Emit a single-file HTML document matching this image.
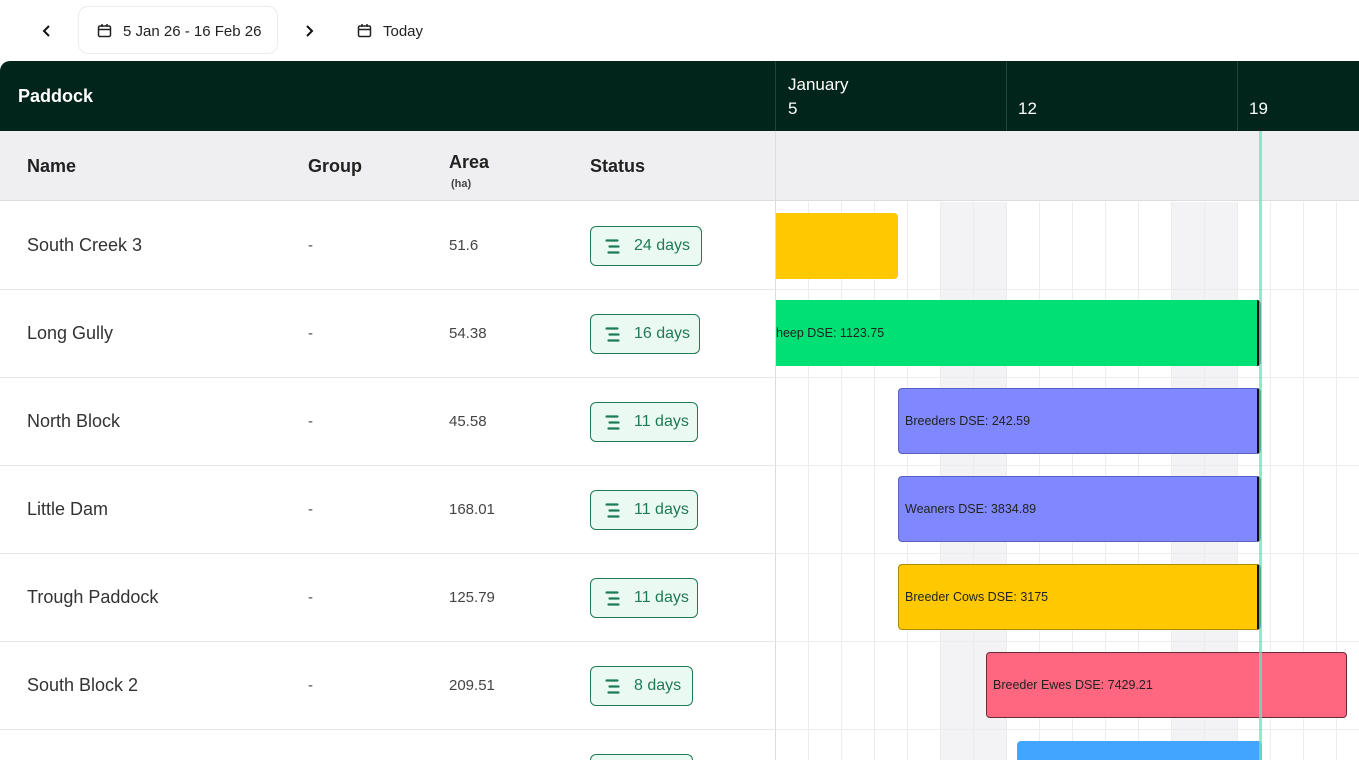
<!DOCTYPE html>
<html style="height:760px;overflow:hidden"><head><style>
*{box-sizing:border-box;margin:0;padding:0}
body{width:1359px;height:760px;overflow:hidden;background:#fff;font-family:"Liberation Sans",sans-serif;position:relative;color:#222}
.a{position:absolute}
.hdr{left:0;top:61px;width:1359px;height:70px;background:#01251a;border-top-left-radius:10px}
.sub{left:0;top:131px;width:1359px;height:70px;background:#efeff1;border-bottom:1px solid #dcdcdc}
.th{font-size:18px;font-weight:bold;color:#222}
.row{left:0;width:776px;height:88px;border-bottom:1px solid #e6e6e6}
.nm{font-size:18px;color:#333}
.sm{font-size:15px;color:#444}
.badge{height:40px;border:1px solid #1f7a55;border-radius:6px;background:#eafaf2;color:#1f7a55;font-size:16px;display:flex;align-items:center;padding-left:14px}
.bar{border-radius:4px;font-size:12.5px;color:#222;display:flex;align-items:center;padding-left:6px;height:66px}
</style></head><body>
<div class="a" style="left:0;top:0;width:1359px;height:760px;overflow:hidden">
<svg class="a" style="left:40px;top:24px" width="14" height="14" viewBox="0 0 14 14"><path d="M9 2 L4 7 L9 12" stroke="#111" stroke-width="2" fill="none"/></svg>
<div class="a" style="left:78px;top:6px;width:200px;height:48px;border:1px solid #ececec;border-radius:10px"></div>
<svg class="a" style="left:97px;top:23px" width="15" height="15" viewBox="0 0 15 15"><rect x="1.5" y="3" width="12" height="10.5" rx="1.5" stroke="#222" stroke-width="1.5" fill="none"/><path d="M1.5 6.5H13.5M5 1V4M10 1V4" stroke="#222" stroke-width="1.5"/></svg>
<div class="a" style="left:123px;top:23px;font-size:15px;color:#222">5 Jan 26 - 16 Feb 26</div>
<svg class="a" style="left:302px;top:24px" width="14" height="14" viewBox="0 0 14 14"><path d="M5 2 L10 7 L5 12" stroke="#111" stroke-width="2" fill="none"/></svg>
<svg class="a" style="left:357px;top:23px" width="15" height="15" viewBox="0 0 15 15"><rect x="1.5" y="3" width="12" height="10.5" rx="1.5" stroke="#222" stroke-width="1.5" fill="none"/><path d="M1.5 6.5H13.5M5 1V4M10 1V4" stroke="#222" stroke-width="1.5"/></svg>
<div class="a" style="left:383px;top:23px;font-size:15px;color:#222">Today</div>

<div class="a hdr"></div>
<div class="a" style="left:18px;top:86px;color:#fff;font-weight:bold;font-size:18px">Paddock</div>
<div class="a" style="left:775px;top:61px;width:1px;height:70px;background:#1d4536"></div>
<div class="a" style="left:1006px;top:61px;width:1px;height:70px;background:#1d4536"></div>
<div class="a" style="left:1237px;top:61px;width:1px;height:70px;background:#1d4536"></div>
<div class="a" style="left:788px;top:75px;color:#fff;font-size:17px">January</div>
<div class="a" style="left:788px;top:99px;color:#fff;font-size:17px">5</div>
<div class="a" style="left:1018px;top:99px;color:#fff;font-size:17px">12</div>
<div class="a" style="left:1249px;top:99px;color:#fff;font-size:17px">19</div>

<div class="a sub"></div>
<div class="a" style="left:775px;top:131px;width:1px;height:629px;background:#dcdcdc"></div>
<div class="a th" style="left:27px;top:156px">Name</div>
<div class="a th" style="left:308px;top:156px">Group</div>
<div class="a th" style="left:449px;top:152px">Area</div>
<div class="a" style="left:451px;top:178px;font-size:11px;font-weight:bold;color:#444">(ha)</div>
<div class="a th" style="left:590px;top:156px">Status</div>

<div class="a" style="left:941px;top:202px;width:66px;height:558px;background:#f3f3f5"></div>
<div class="a" style="left:1172px;top:202px;width:66px;height:558px;background:#f3f3f5"></div>
<div class="a" style="left:776px;top:202px;width:583px;height:558px;background-image:repeating-linear-gradient(90deg,transparent 0 32px,#ececec 32px 33px),repeating-linear-gradient(180deg,transparent 0 87px,#ececec 87px 88px)"></div>

<div class="a row" style="top:202px"></div>
<div class="a row" style="top:290px"></div>
<div class="a row" style="top:378px"></div>
<div class="a row" style="top:466px"></div>
<div class="a row" style="top:554px"></div>
<div class="a row" style="top:642px"></div>

<div class="a nm" style="left:27px;top:235px">South Creek 3</div>
<div class="a nm" style="left:27px;top:323px">Long Gully</div>
<div class="a nm" style="left:27px;top:411px">North Block</div>
<div class="a nm" style="left:27px;top:499px">Little Dam</div>
<div class="a nm" style="left:27px;top:587px">Trough Paddock</div>
<div class="a nm" style="left:27px;top:675px">South Block 2</div>
<div class="a sm" style="left:308px;top:237px">-</div>
<div class="a sm" style="left:308px;top:325px">-</div>
<div class="a sm" style="left:308px;top:413px">-</div>
<div class="a sm" style="left:308px;top:501px">-</div>
<div class="a sm" style="left:308px;top:589px">-</div>
<div class="a sm" style="left:308px;top:677px">-</div>
<div class="a sm" style="left:449px;top:237px">51.6</div>
<div class="a sm" style="left:449px;top:325px">54.38</div>
<div class="a sm" style="left:449px;top:413px">45.58</div>
<div class="a sm" style="left:449px;top:501px">168.01</div>
<div class="a sm" style="left:449px;top:589px">125.79</div>
<div class="a sm" style="left:449px;top:677px">209.51</div>

<svg width="0" height="0" style="position:absolute"><defs><g id="ic"><path d="M1 1.5H12M4 7.5H13M3 13.5H13" stroke="#1f7a55" stroke-width="2.2" stroke-linecap="round"/></g></defs></svg>
<div class="a badge" style="left:590px;top:226px;width:112px"><svg width="15" height="15" viewBox="0 0 14 15"><use href="#ic"/></svg><span style="margin-left:14px">24 days</span></div>
<div class="a badge" style="left:590px;top:314px;width:110px"><svg width="15" height="15" viewBox="0 0 14 15"><use href="#ic"/></svg><span style="margin-left:14px">16 days</span></div>
<div class="a badge" style="left:590px;top:402px;width:108px"><svg width="15" height="15" viewBox="0 0 14 15"><use href="#ic"/></svg><span style="margin-left:14px">11 days</span></div>
<div class="a badge" style="left:590px;top:490px;width:108px"><svg width="15" height="15" viewBox="0 0 14 15"><use href="#ic"/></svg><span style="margin-left:14px">11 days</span></div>
<div class="a badge" style="left:590px;top:578px;width:108px"><svg width="15" height="15" viewBox="0 0 14 15"><use href="#ic"/></svg><span style="margin-left:14px">11 days</span></div>
<div class="a badge" style="left:590px;top:666px;width:103px"><svg width="15" height="15" viewBox="0 0 14 15"><use href="#ic"/></svg><span style="margin-left:14px">8 days</span></div>
<div class="a" style="left:590px;top:754px;width:103px;height:6px;border:1px solid #1f7a55;border-bottom:none;border-radius:6px 6px 0 0;background:#eafaf2"></div>

<div class="a bar" style="left:776px;top:213px;width:122px;background:#ffc800;border-radius:0 4px 4px 0"></div>
<div class="a bar" style="left:776px;top:300px;width:485px;background:#00e075;border-right:4px solid #111;border-radius:0 4px 4px 0;padding-left:0">heep DSE: 1123.75</div>
<div class="a bar" style="left:898px;top:388px;width:363px;background:#8088ff;border:1px solid #5a62c0;border-right:4px solid #111">Breeders DSE: 242.59</div>
<div class="a bar" style="left:898px;top:476px;width:363px;background:#8088ff;border:1px solid #5a62c0;border-right:4px solid #111">Weaners DSE: 3834.89</div>
<div class="a bar" style="left:898px;top:564px;width:363px;background:#ffc800;border:1px solid #b08a00;border-right:4px solid #111">Breeder Cows DSE: 3175</div>
<div class="a bar" style="left:986px;top:652px;width:361px;background:#ff6680;border:1px solid #6a2a35">Breeder Ewes DSE: 7429.21</div>
<div class="a" style="left:1017px;top:741px;width:245px;height:19px;background:#42a5ff;border-radius:4px 4px 0 0"></div>

<div class="a" style="left:1259px;top:131px;width:3px;height:629px;background:rgba(100,230,190,0.75)"></div>
</div>
</body></html>
